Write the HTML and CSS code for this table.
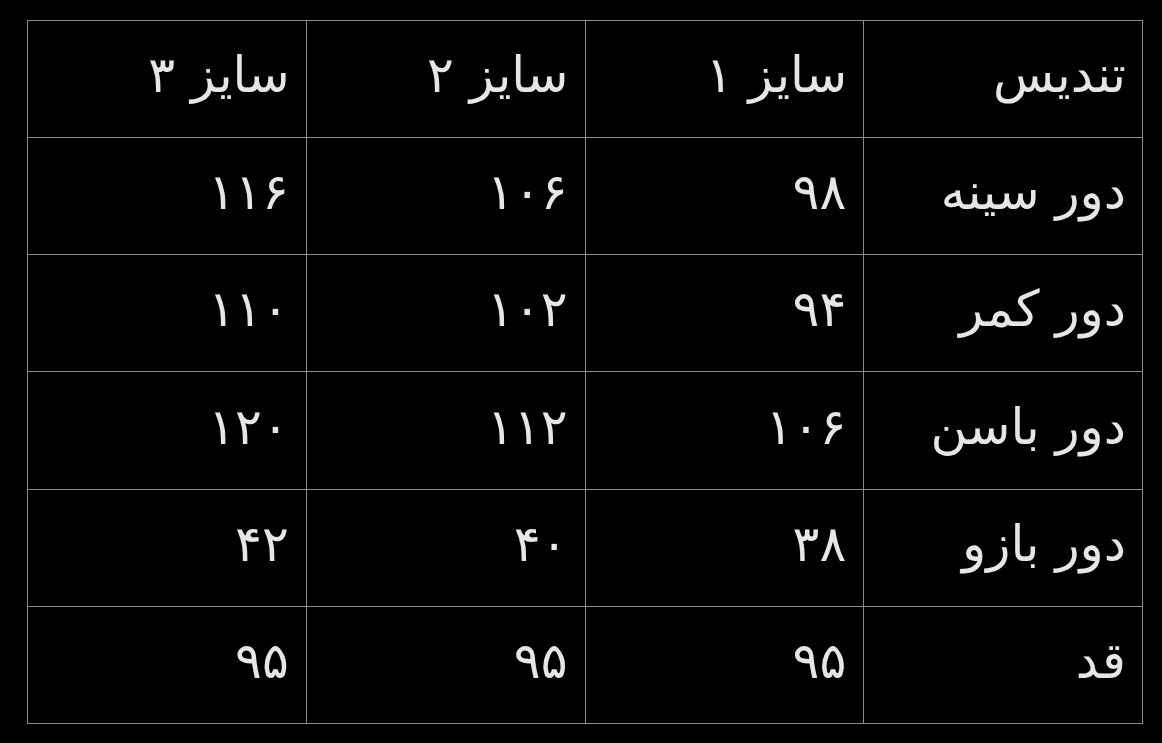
FILE: index.html
```html
<!DOCTYPE html>
<html lang="fa" dir="rtl">
<head>
<meta charset="utf-8">
<link rel="stylesheet" href="styles.css">
</head>
<body>
<div class="wrap">
<table class="sizes">
<tr><td>تندیس</td><td>سایز ۱</td><td>سایز ۲</td><td>سایز ۳</td></tr>
<tr><td>دور سینه</td><td class="n">۹۸</td><td class="n">۱۰۶</td><td class="n">۱۱۶</td></tr>
<tr><td>دور کمر</td><td class="n">۹۴</td><td class="n">۱۰۲</td><td class="n">۱۱۰</td></tr>
<tr><td>دور باسن</td><td class="n">۱۰۶</td><td class="n">۱۱۲</td><td class="n">۱۲۰</td></tr>
<tr><td>دور بازو</td><td class="n">۳۸</td><td class="n">۴۰</td><td class="n">۴۲</td></tr>
<tr><td>قد</td><td class="n">۹۵</td><td class="n">۹۵</td><td class="n">۹۵</td></tr>
</table>
</div>
</body>
</html>
```
FILE: styles.css
```css
html, body {
  margin: 0;
  padding: 0;
  background: #000;
}
body {
  width: 1162px;
  height: 743px;
  overflow: hidden;
}
.wrap {
  padding: 20px 19px 0 0;
  display: flex;
  justify-content: flex-start;
}
.sizes {
  border-collapse: collapse;
  width: 1116px;
  height: 704px;
  direction: rtl;
  font-family: "DejaVu Sans", sans-serif;
  color: #e6e6e6;
  font-size: 50px;
}
.sizes td {
  border: 1px solid #8a8a8a;
  padding: 0 16px 8px 0;
  text-align: right;
  vertical-align: middle;
  width: 25%;
  box-sizing: border-box;
}
.sizes td.n {
  padding-right: 17px;
}
```
